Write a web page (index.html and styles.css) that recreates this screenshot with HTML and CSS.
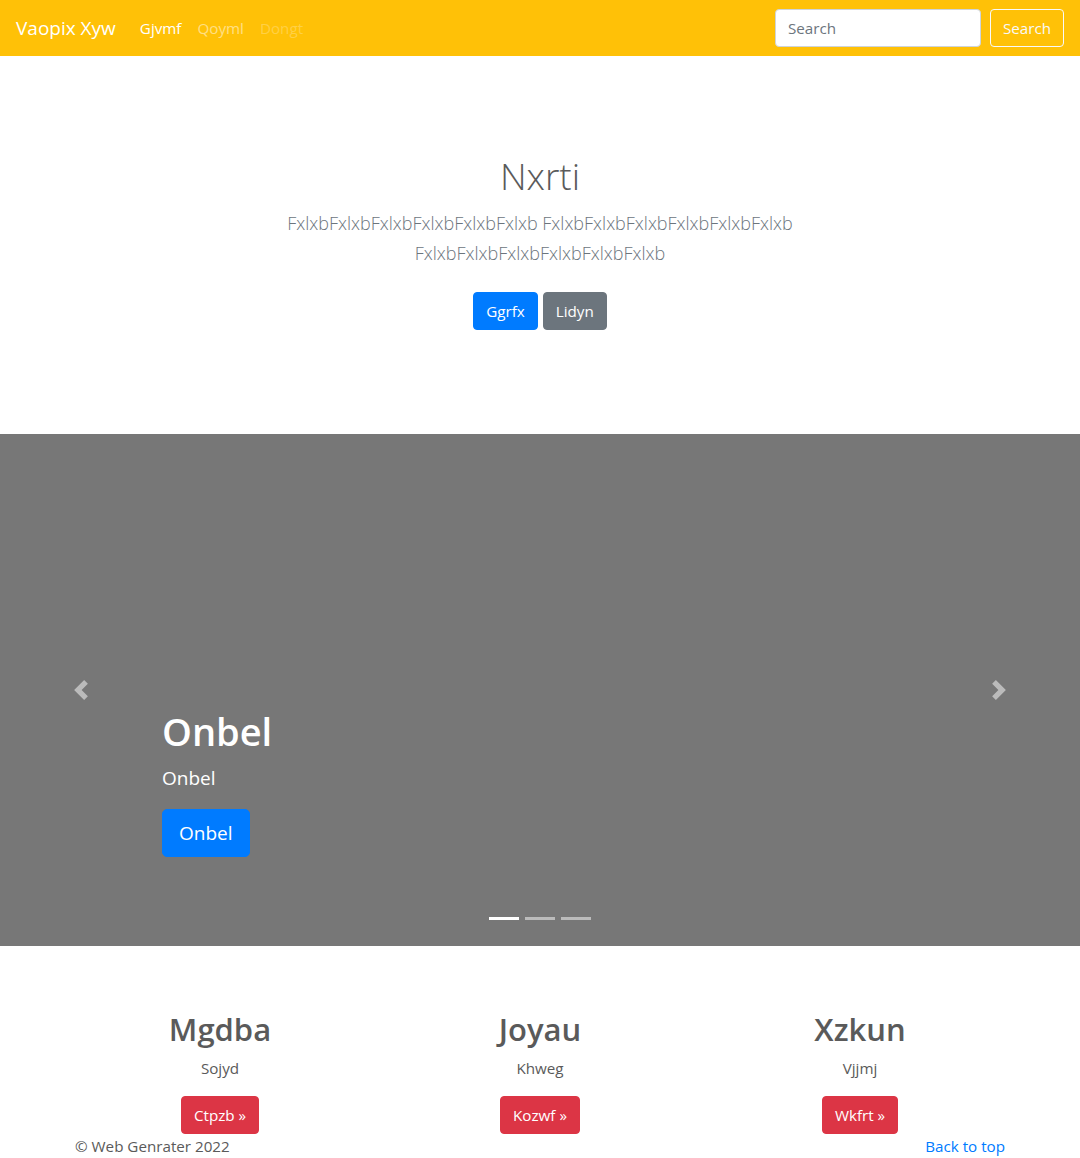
FILE: index.html
```html
<!DOCTYPE html>
<html lang="en">
<head>
<meta charset="utf-8">
<title>Vaopix Xyw</title>
<link rel="stylesheet" href="styles.css">
</head>
<body>
<header class="navbar">
  <div class="nav-left">
    <a class="brand" href="#">Vaopix Xyw</a>
    <ul class="nav-links">
      <li><a class="nav-link active" href="#">Gjvmf</a></li>
      <li><a class="nav-link" href="#">Qoyml</a></li>
      <li><a class="nav-link disabled" href="#">Dongt</a></li>
    </ul>
  </div>
  <form class="search-form">
    <input class="search-input" type="text" placeholder="Search">
    <button class="btn btn-outline-light" type="button">Search</button>
  </form>
</header>

<section class="jumbotron">
  <div class="jumbo-inner">
    <h1 class="jumbo-heading">Nxrti</h1>
    <p class="lead">FxlxbFxlxbFxlxbFxlxbFxlxbFxlxb FxlxbFxlxbFxlxbFxlxbFxlxbFxlxb FxlxbFxlxbFxlxbFxlxbFxlxbFxlxb</p>
    <div class="jumbo-actions">
      <a class="btn btn-primary" href="#">Ggrfx</a>
      <a class="btn btn-secondary" href="#">Lidyn</a>
    </div>
  </div>
</section>

<section class="carousel">
  <div class="carousel-caption">
    <h1 class="caption-title">Onbel</h1>
    <p class="caption-text">Onbel</p>
    <a class="btn btn-lg btn-primary" href="#">Onbel</a>
  </div>
  <a class="carousel-control prev" href="#" aria-label="Previous">
    <svg width="20" height="20" viewBox="0 0 8 8" fill="#fff"><path d="M5.25 0l-4 4 4 4 1.5-1.5L4.25 4l2.5-2.5L5.25 0z"/></svg>
  </a>
  <a class="carousel-control next" href="#" aria-label="Next">
    <svg width="20" height="20" viewBox="0 0 8 8" fill="#fff"><path d="M2.75 0l-1.5 1.5L3.75 4l-2.5 2.5L2.75 8l4-4-4-4z"/></svg>
  </a>
  <ol class="indicators">
    <li class="indicator active"></li>
    <li class="indicator"></li>
    <li class="indicator"></li>
  </ol>
</section>

<section class="marketing">
  <div class="col">
    <h2 class="col-title">Mgdba</h2>
    <p class="col-text">Sojyd</p>
    <a class="btn btn-danger" href="#">Ctpzb &raquo;</a>
  </div>
  <div class="col">
    <h2 class="col-title">Joyau</h2>
    <p class="col-text">Khweg</p>
    <a class="btn btn-danger" href="#">Kozwf &raquo;</a>
  </div>
  <div class="col">
    <h2 class="col-title">Xzkun</h2>
    <p class="col-text">Vjjmj</p>
    <a class="btn btn-danger" href="#">Wkfrt &raquo;</a>
  </div>
</section>

<footer class="footer">
  <p class="copy">&copy; Web Genrater 2022</p>
  <a class="back-top" href="#">Back to top</a>
</footer>
</body>
</html>
```

FILE: styles.css
```css
* { box-sizing: border-box; }

body {
  margin: 0;
  font-family: "Open Sans", "Noto Sans", sans-serif;
  font-size: 15.2px;
  line-height: 24px;
  color: #5a5a5a;
  background: #fff;
}

a { text-decoration: none; }

/* Navbar */
.navbar {
  height: 56px;
  background: #ffc107;
  padding: 8px 16px;
  display: flex;
  align-items: center;
  justify-content: space-between;
}
.nav-left { display: flex; align-items: center; }
.brand {
  color: #fff;
  font-size: 19px;
  line-height: 30px;
  padding: 5px 0;
  margin-right: 16px;
}
.nav-links {
  display: flex;
  list-style: none;
  margin: 0;
  padding: 0;
}
.nav-link {
  display: block;
  padding: 8px;
  color: rgba(255, 255, 255, 0.5);
}
.nav-link.active { color: #fff; }
.nav-link.disabled { color: rgba(255, 255, 255, 0.25); }

.search-form { display: flex; align-items: center; }
.search-input {
  width: 206px;
  height: 38px;
  padding: 6px 12px;
  font: inherit;
  color: #495057;
  background: #fff;
  border: 1px solid #ced4da;
  border-radius: 4px;
  margin-right: 9px;
}
.search-input::placeholder { color: #6c757d; }

/* Buttons */
.btn {
  display: inline-block;
  font-family: inherit;
  font-size: 15.2px;
  line-height: 24px;
  padding: 6px 12px;
  border: 1px solid transparent;
  border-radius: 4px;
  color: #fff;
  background: transparent;
  cursor: pointer;
}
.btn-outline-light { border-color: #f8f9fa; color: #f8f9fa; }
.btn-primary { background: #007bff; border-color: #007bff; }
.btn-secondary { background: #6c757d; border-color: #6c757d; }
.btn-danger { background: #dc3545; border-color: #dc3545; }
.btn-lg {
  font-size: 19px;
  line-height: 30px;
  padding: 8px 16px;
  border-radius: 5px;
}

/* Jumbotron */
.jumbotron {
  padding: 96px 0;
  text-align: center;
}
.jumbo-inner {
  width: 610px;
  margin: 0 auto;
}
.jumbo-heading {
  margin: 0 0 8px;
  font-size: 37px;
  line-height: 48px;
  font-weight: 300;
}
.lead {
  margin: 0 0 16px;
  font-size: 18px;
  line-height: 30px;
  font-weight: 300;
  color: #6c757d;
}
.jumbo-actions {
  display: flex;
  justify-content: center;
  gap: 5px;
  padding: 8px 0;
}

/* Carousel */
.carousel {
  position: relative;
  height: 512px;
  background: #777;
}
.carousel-caption {
  position: absolute;
  left: 15%;
  right: 15%;
  bottom: 89px;
  color: #fff;
  text-align: left;
}
.caption-title {
  margin: 0 0 8px;
  font-size: 38px;
  line-height: 48px;
  font-weight: 600;
}
.caption-text {
  margin: 0 0 16px;
  font-size: 19px;
  line-height: 30px;
}
.carousel-control {
  position: absolute;
  top: 246px;
  width: 20px;
  height: 20px;
  opacity: 0.5;
  display: flex;
}
.carousel-control.prev { left: 71px; }
.carousel-control.next { right: 71px; }
.indicators {
  position: absolute;
  left: 0;
  right: 0;
  bottom: 26px;
  margin: 0;
  padding: 0;
  list-style: none;
  display: flex;
  justify-content: center;
  gap: 6px;
}
.indicator {
  width: 30px;
  height: 3px;
  background: rgba(255, 255, 255, 0.5);
}
.indicator.active { background: #fff; }

/* Marketing */
.marketing {
  width: 960px;
  margin: 0 auto;
  padding-top: 64px;
  display: grid;
  grid-template-columns: repeat(3, 1fr);
}
.col {
  padding: 0 15px;
  text-align: center;
}
.col-title {
  margin: 0 0 8px;
  font-size: 31px;
  line-height: 38.4px;
  font-weight: 600;
}
.col-text { margin: 0 0 16px; }

/* Footer */
.footer {
  width: 960px;
  margin: 0 auto;
  padding: 0 15px;
  display: flex;
  justify-content: space-between;
}
.copy { margin: 0; }
.back-top { color: #007bff; }
```
